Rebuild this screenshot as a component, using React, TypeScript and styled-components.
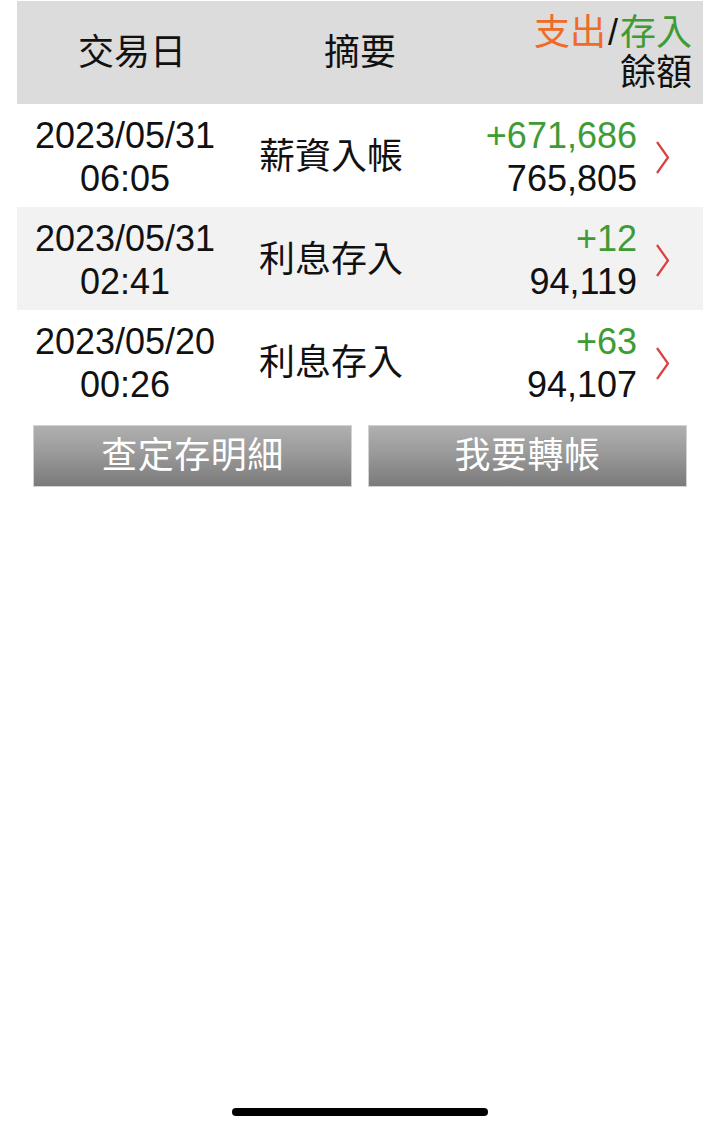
import React from "react";
import styled, { createGlobalStyle } from "styled-components";

const GlobalStyle = createGlobalStyle`
  html, body {
    margin: 0;
    padding: 0;
    background: #ffffff;
  }
  body {
    font-family: "Liberation Sans", "Noto Sans CJK TC", sans-serif;
    color: #111111;
  }
`;

const Screen = styled.div`
  min-height: 100vh;
  display: flex;
  flex-direction: column;
  box-sizing: border-box;
  padding: 1px 17px 14px;
`;

const HeaderRow = styled.div`
  display: grid;
  grid-template-columns: 230px 226px 1fr;
  align-items: center;
  height: 103px;
  background: #dcdcdc;
  font-size: 36px;
`;

const HeaderCell = styled.div<{ $align?: "center" | "right" }>`
  text-align: ${(p) => p.$align ?? "center"};
  padding-right: ${(p) => (p.$align === "right" ? "11px" : "0")};
  line-height: 40px;
`;

const Orange = styled.span`
  color: #f06a28;
`;

const Green = styled.span`
  color: #3f9b34;
`;

const Slash = styled.span`
  color: #111111;
  padding: 0 2px;
`;

const Row = styled.div<{ $alt?: boolean }>`
  display: grid;
  grid-template-columns: 216px 196px 1fr 66px;
  align-items: center;
  height: 103px;
  background: ${(p) => (p.$alt ? "#f2f2f2" : "#ffffff")};
  font-size: 36px;
  line-height: 43px;
`;

const DateCell = styled.div`
  text-align: center;
  padding-top: 3px;
`;

const SummaryCell = styled.div`
  text-align: center;
  padding-top: 2px;
`;

const AmountCell = styled.div`
  text-align: right;
  padding-top: 3px;
`;

const Delta = styled.div`
  color: #3f9b34;
`;

const ChevronCell = styled.div`
  display: flex;
  align-items: center;
  padding-left: 18px;
  padding-top: 4px;
`;

const ButtonBar = styled.div`
  display: grid;
  grid-template-columns: 1fr 1fr;
  gap: 16px;
  padding: 12px 16px 0;
`;

const ActionButton = styled.button`
  height: 62px;
  box-sizing: border-box;
  border: 1px solid #d2d2d2;
  border-radius: 0;
  background: linear-gradient(#b0b0b0 0%, #9a9a9a 45%, #7a7a7a 100%);
  color: #ffffff;
  font-family: "Liberation Sans", "Noto Sans CJK TC", sans-serif;
  font-size: 36px;
  letter-spacing: 0.5px;
  line-height: 1;
  padding: 0;
  cursor: pointer;
`;

const Spacer = styled.div`
  flex: 1;
`;

const HomeIndicator = styled.div`
  align-self: center;
  width: 256px;
  height: 8px;
  border-radius: 4px;
  background: #000000;
`;

const Chevron = () => (
  <svg width="15" height="35" viewBox="0 0 15 35" fill="none">
    <path
      d="M2 2 L13 17.5 L2 33"
      stroke="#d9403f"
      strokeWidth="2.2"
      strokeLinejoin="miter"
      strokeLinecap="butt"
    />
  </svg>
);

type Tx = {
  date: string;
  time: string;
  summary: string;
  delta: string;
  balance: string;
};

const txs: Tx[] = [
  { date: "2023/05/31", time: "06:05", summary: "薪資入帳", delta: "+671,686", balance: "765,805" },
  { date: "2023/05/31", time: "02:41", summary: "利息存入", delta: "+12", balance: "94,119" },
  { date: "2023/05/20", time: "00:26", summary: "利息存入", delta: "+63", balance: "94,107" },
];

export default function App() {
  return (
    <>
      <GlobalStyle />
      <Screen>
        <HeaderRow>
          <HeaderCell>交易日</HeaderCell>
          <HeaderCell>摘要</HeaderCell>
          <HeaderCell $align="right">
            <div>
              <Orange>支出</Orange>
              <Slash>/</Slash>
              <Green>存入</Green>
            </div>
            <div>餘額</div>
          </HeaderCell>
        </HeaderRow>
        {txs.map((t, i) => (
          <Row key={i} $alt={i % 2 === 1}>
            <DateCell>
              <div>{t.date}</div>
              <div>{t.time}</div>
            </DateCell>
            <SummaryCell>{t.summary}</SummaryCell>
            <AmountCell>
              <Delta>{t.delta}</Delta>
              <div>{t.balance}</div>
            </AmountCell>
            <ChevronCell>
              <Chevron />
            </ChevronCell>
          </Row>
        ))}
        <ButtonBar>
          <ActionButton>查定存明細</ActionButton>
          <ActionButton>我要轉帳</ActionButton>
        </ButtonBar>
        <Spacer />
        <HomeIndicator />
      </Screen>
    </>
  );
}
